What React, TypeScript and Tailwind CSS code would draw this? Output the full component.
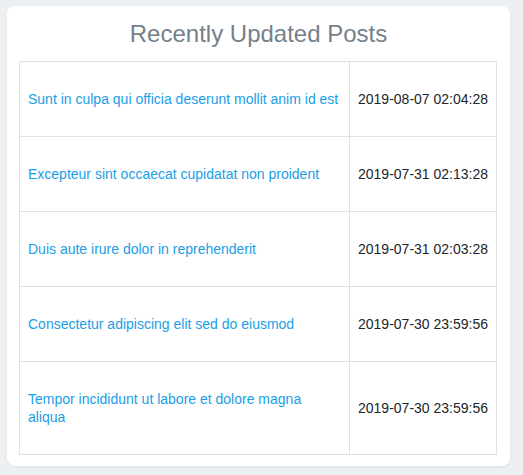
import React from "react";

const rows = [
  ["Sunt in culpa qui officia deserunt mollit anim id est", "2019-08-07 02:04:28"],
  ["Excepteur sint occaecat cupidatat non proident", "2019-07-31 02:13:28"],
  ["Duis aute irure dolor in reprehenderit", "2019-07-31 02:03:28"],
  ["Consectetur adipiscing elit sed do eiusmod", "2019-07-30 23:59:56"],
  ["Tempor incididunt ut labore et dolore magna aliqua", "2019-07-30 23:59:56"],
];

export default function App() {
  return (
    <div
      className="w-[523px] h-[475px] bg-[#edf0f3] pl-[7px] pt-[6px]"
      style={{ fontFamily: '"Liberation Sans", Arial, sans-serif' }}
    >
      <div className="w-[503px] h-[460px] bg-white rounded-lg shadow-[0_1px_3px_rgba(0,0,0,0.06)] px-[12px] pt-[13px]">
        <h2 className="text-center text-[24px] leading-[29px] text-[#75808b] mb-[13px]">
          Recently Updated Posts
        </h2>
        <table className="w-[478px] border-collapse text-[14px] leading-[18px]">
          <tbody>
            {rows.map(([title, date], i) => (
              <tr key={i}>
                <td className="w-[330px] border border-[#dee2e6] pl-[8px] pr-[9px] py-[28px] align-middle text-[#1a9ee6]">
                  <a href="#" className="text-[#1a9ee6]">{title}</a>
                </td>
                <td className="border border-[#dee2e6] px-[8px] py-[28px] align-middle text-[#212529] whitespace-nowrap">
                  {date}
                </td>
              </tr>
            ))}
          </tbody>
        </table>
      </div>
    </div>
  );
}
